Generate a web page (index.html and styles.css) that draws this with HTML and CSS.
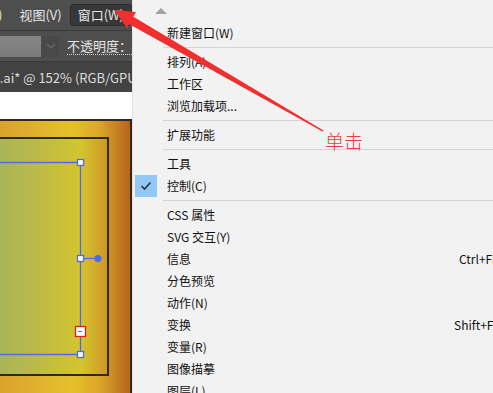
FILE: index.html
```html
<!DOCTYPE html>
<html lang="zh">
<head>
<meta charset="utf-8">
<link rel="stylesheet" href="styles.css">
</head>
<body>
<div class="app">
  <div class="left">
    <div class="menubar">
      <span class="mb-item mb-cut">)</span>
      <span class="mb-item">视图(V)</span>
      <span class="mb-item mb-active">窗口(W)</span>
    </div>
    <div class="controlbar">
      <div class="field"></div>
      <div class="drop"><svg width="10" height="6" viewBox="0 0 10 6"><path d="M1 1l4 4 4-4" fill="none" stroke="#6a6a6a" stroke-width="1.2"/></svg></div>
      <span class="opacity">不透明度：</span>
    </div>
    <div class="tabbar"><span class="tabtext">l.ai* @ 152% (RGB/GPU</span></div>
    <div class="whitestrip"></div>
    <div class="canvas">
      <svg width="132" height="274" viewBox="0 0 132 274">
        <defs>
          <linearGradient id="outerG" x1="0" y1="0" x2="132" y2="0" gradientUnits="userSpaceOnUse">
            <stop offset="0" stop-color="#dba22e"/>
            <stop offset="0.55" stop-color="#e4c12a"/>
            <stop offset="0.75" stop-color="#dba629"/>
            <stop offset="1" stop-color="#b3621b"/>
          </linearGradient>
          <linearGradient id="innerG" x1="0" y1="0" x2="108" y2="0" gradientUnits="userSpaceOnUse">
            <stop offset="0" stop-color="#a9b55a"/>
            <stop offset="0.4" stop-color="#bfbb45"/>
            <stop offset="0.75" stop-color="#d4c42d"/>
            <stop offset="1" stop-color="#cf9527"/>
          </linearGradient>
        </defs>
        <rect x="-10" y="1" width="141" height="290" fill="url(#outerG)" stroke="#2d2a1c" stroke-width="2"/>
        <rect x="-10" y="19" width="118" height="237" fill="url(#innerG)" stroke="#2d2a1c" stroke-width="2"/>
        <g stroke="#4a6cf2" stroke-width="1.3" fill="none">
          <path d="M0 43.5H80.5V235.5H0"/>
          <path d="M80.5 139.5H98"/>
        </g>
        <circle cx="98" cy="139.5" r="3.6" fill="#4a6cf2"/>
        <g fill="#fff" stroke="#4a6cf2" stroke-width="1.3">
          <rect x="77.5" y="40.5" width="6" height="6"/>
          <rect x="77.5" y="136.5" width="6" height="6"/>
          <rect x="77.5" y="232.5" width="6" height="6"/>
        </g>
        <rect x="75.5" y="207.5" width="10" height="10" fill="#fff" stroke="#e51c1c" stroke-width="1.3"/>
        <path d="M78 212.5h4" stroke="#4a6cf2" stroke-width="1"/>
      </svg>
    </div>
  </div>
  <div class="menu">
    <div class="menu-top"><span class="uparrow"></span></div>
    <div class="item">新建窗口(W)</div>
    <div class="sep"></div>
    <div class="item">排列(A)</div>
    <div class="item">工作区</div>
    <div class="item">浏览加载项...</div>
    <div class="sep"></div>
    <div class="item">扩展功能</div>
    <div class="sep"></div>
    <div class="item">工具</div>
    <div class="item checked"><span class="check"><svg width="12" height="10" viewBox="0 0 12 10"><path d="M1.5 5l3 3 6-6.5" fill="none" stroke="#333" stroke-width="1.6"/></svg></span>控制(C)</div>
    <div class="sep"></div>
    <div class="item">CSS 属性</div>
    <div class="item">SVG 交互(Y)</div>
    <div class="item">信息<span class="key">Ctrl+F8</span></div>
    <div class="item">分色预览</div>
    <div class="item">动作(N)</div>
    <div class="item">变换<span class="key key-shift">Shift+F8</span></div>
    <div class="item">变量(R)</div>
    <div class="item">图像描摹</div>
    <div class="item">图层(L)</div>
  </div>
</div>
<div class="annot">
  <svg width="493" height="393" viewBox="0 0 493 393">
    <polygon points="114,10 136,12 127,28" fill="#f22f2f"/>
    <polygon points="128,23.5 133,16.5 323.5,130.5 322.5,131.5" fill="#f22f2f"/>
  </svg>
  <span class="click-label">单击</span>
</div>
</body>
</html>
```
FILE: styles.css
```css
* { box-sizing: border-box; }
html, body { margin: 0; padding: 0; }
body {
  width: 493px;
  height: 393px;
  overflow: hidden;
  position: relative;
  font-family: "Noto Sans CJK SC", "Noto Sans", sans-serif;
  background: #f2f2f2;
}
.app {
  display: flex;
  width: 493px;
  height: 393px;
}
.left {
  width: 132px;
  flex: none;
  display: flex;
  flex-direction: column;
  overflow: hidden;
  background: #4d4d4d;
}
.menubar {
  height: 31px;
  display: flex;
  align-items: center;
  border-bottom: 1px solid #3a3a3a;
  background: #4e4e4e;
  white-space: nowrap;
}
.mb-item {
  color: #e6e6e6;
  font-size: 13px;
  line-height: 20px;
}
.mb-cut { margin-left: -2px; margin-right: 17px; }
.mb-active {
  margin-left: 8px;
  padding: 0 7px;
  background: #383838;
  border: 1px solid #2c2c2c;
  border-radius: 3px;
  height: 22px;
  line-height: 20px;
}
.controlbar {
  height: 31px;
  display: flex;
  align-items: center;
  background: #4e4e4e;
  border-bottom: 1px solid #3a3a3a;
  white-space: nowrap;
}
.field {
  width: 45px;
  height: 21px;
  background: linear-gradient(#858585, #7a7a7a);
}
.drop {
  width: 18px;
  height: 21px;
  margin-left: 1px;
  background: #494949;
  display: flex;
  align-items: center;
  justify-content: center;
}
.opacity {
  margin-left: 8px;
  color: #e6e6e6;
  font-size: 13px;
  line-height: 16px;
  border-bottom: 1px dotted #d0d0d0;
}
.tabbar {
  height: 30px;
  background: #424242;
  display: flex;
  align-items: center;
  white-space: nowrap;
}
.tabtext {
  margin-left: -4px;
  color: #dcdcdc;
  font-size: 13px;
}
.whitestrip {
  height: 27px;
  background: #ffffff;
}
.canvas {
  flex: 1;
  background: #ffffff;
  overflow: hidden;
}
.canvas svg { display: block; }
.menu {
  flex: 1;
  background: #f2f2f2;
  border-left: 1px solid #e2e2e2;
  overflow: hidden;
  white-space: nowrap;
}
.menu-top {
  height: 22px;
  position: relative;
}
.uparrow {
  position: absolute;
  left: 22px;
  top: 8px;
  width: 0;
  height: 0;
  border-left: 6px solid transparent;
  border-right: 6px solid transparent;
  border-bottom: 6px solid #a2a2a2;
}
.item {
  height: 22px;
  line-height: 22px;
  font-size: 12px;
  color: #111;
  padding-left: 34px;
  position: relative;
}
.sep {
  height: 7px;
  margin-left: 30px;
  position: relative;
}
.sep::after {
  content: "";
  position: absolute;
  left: 0;
  right: 0;
  top: 3px;
  height: 1px;
  background: #d4d4d4;
}
.check {
  position: absolute;
  left: 2px;
  top: 0;
  width: 22px;
  height: 22px;
  background: #92c8f6;
  display: flex;
  align-items: center;
  justify-content: center;
}
.key {
  position: absolute;
  left: 326px;
  top: 0;
}
.key-shift { left: 321px; }
.annot {
  position: absolute;
  left: 0;
  top: 0;
  width: 493px;
  height: 393px;
  pointer-events: none;
}
.annot svg { position: absolute; left: 0; top: 0; }
.click-label {
  position: absolute;
  left: 325px;
  top: 128px;
  font-size: 19px;
  line-height: 26px;
  color: #ee3a3a;
  font-weight: 300;
}
```
